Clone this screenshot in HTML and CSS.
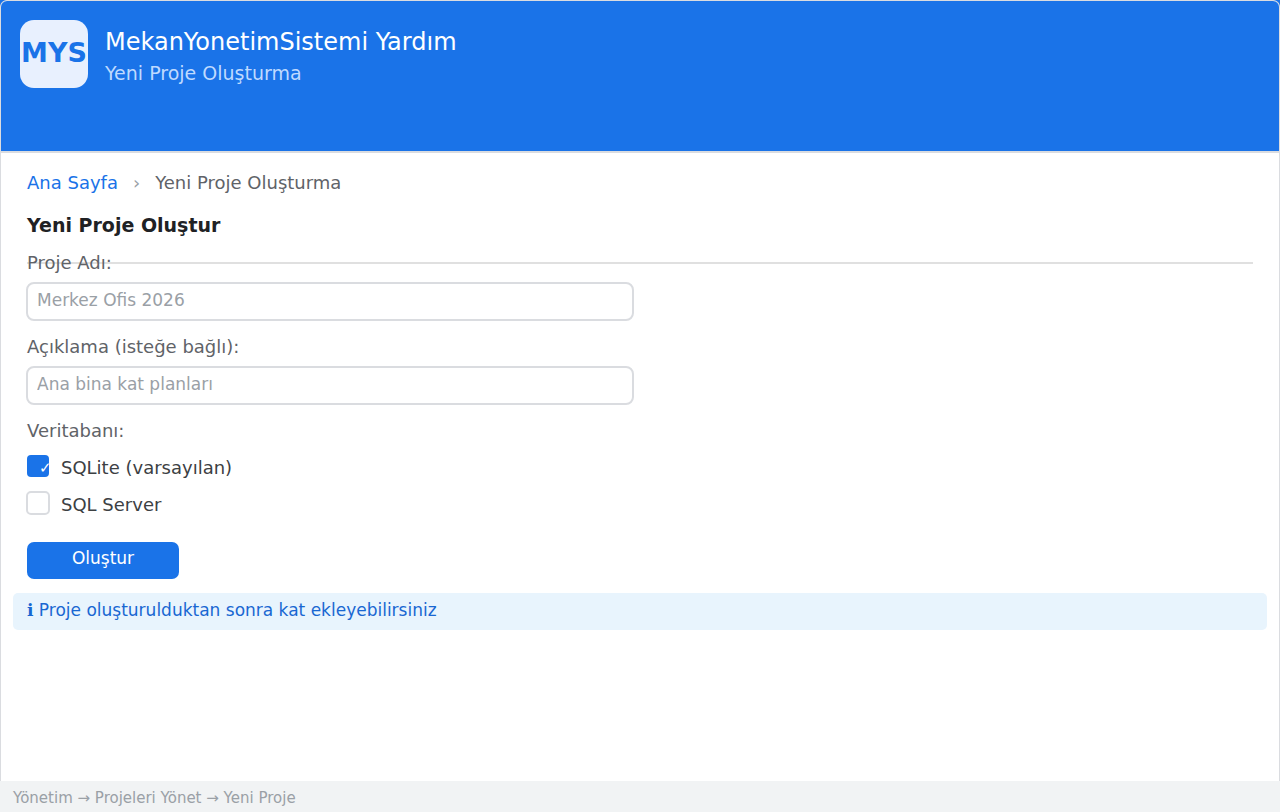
FILE: index.html
```
<!DOCTYPE html>
<html lang="tr">
<head>
    <meta charset="UTF-8">
    <meta name="viewport" content="width=device-width, initial-scale=1.0">
    <title>MekanYonetimSistemi Yardım</title>
    <link rel="stylesheet" href="styles.css">
</head>
<body>
    <div class="window">
        <header class="header">
            <div class="logo">MYS</div>
            <div class="titles">
                <div class="title">MekanYonetimSistemi Yardım</div>
                <div class="subtitle">Yeni Proje Oluşturma</div>
            </div>
        </header>

        <main class="content">
            <nav class="breadcrumb">
                <a href="#">Ana Sayfa</a>
                <span class="separator">›</span>
                <span>Yeni Proje Oluşturma</span>
            </nav>

            <h1 class="heading">Yeni Proje Oluştur</h1>

            <form class="form">
                <div class="field">
                    <label for="name">Proje Adı:</label>
                    <input type="text" id="name" class="text-input" placeholder="Merkez Ofis 2026">
                </div>
                <div class="field">
                    <label for="description">Açıklama (isteğe bağlı):</label>
                    <input type="text" id="description" class="text-input" placeholder="Ana bina kat planları">
                </div>
                <fieldset class="options">
                    <legend>Veritabanı:</legend>
                    <label class="option"><input type="checkbox" class="checkbox" checked>SQLite (varsayılan)</label>
                    <label class="option"><input type="checkbox" class="checkbox">SQL Server</label>
                </fieldset>
                <button type="button" class="button">Oluştur</button>
            </form>

            <p class="note">ℹ Proje oluşturulduktan sonra kat ekleyebilirsiniz</p>
        </main>
    </div>

    <footer class="footer">Yönetim → Projeleri Yönet → Yeni Proje</footer>
</body>
</html>
```
FILE: styles.css
```
* {
    box-sizing: border-box;
}

body {
    display: flex;
    flex-direction: column;
    min-height: 100vh;
    margin: 0;
    font-family: "DejaVu Sans", Verdana, sans-serif;
    font-size: 18px;
    line-height: 22px;
    color: #5f6368;
    background-color: #1a73e8;
}

.window {
    flex: 1;
    border: 1px solid #dadce0;
    border-bottom: 0;
    border-radius: 7px 7px 0 0;
    background-color: white;
    overflow: hidden;
}

/* Header */
.header {
    display: flex;
    gap: 17px;
    min-height: 152px;
    padding: 19px;
    border-bottom: 2px solid #dadce0;
    background-color: #1a73e8;
}

.logo {
    display: flex;
    justify-content: center;
    width: 68px;
    height: 68px;
    border-radius: 14px;
    font-size: 27px;
    font-weight: bold;
    line-height: 66px;
    color: #1a73e8;
    background-color: #e8f0fe;
}

.titles {
    padding-top: 7px;
    line-height: 31px;
}

.title {
    font-size: 24px;
    color: white;
}

.subtitle {
    font-size: 19px;
    color: #bfdaff;
}

/* Content */
.content {
    padding: 19px 12px;
}

.breadcrumb {
    display: flex;
    gap: 15px;
    padding: 0 14px;
}

.breadcrumb a {
    color: #1a73e8;
    text-decoration: none;
}

.separator {
    color: #9aa0a6;
}

.heading {
    margin: 19px 14px 0;
    padding-bottom: 25px;
    border-bottom: 2px solid #e0e0e0;
    font-size: 19px;
    line-height: 24px;
    color: #202124;
}

/* The first label sits on the heading rule */
.form {
    margin: -12px 13px 0;
}

.field {
    display: flex;
    flex-direction: column;
    align-items: flex-start;
    gap: 8px;
    margin-bottom: 15px;
}

.field label {
    padding-left: 1px;
}

.text-input {
    width: calc(50% - 6px);
    height: 39px;
    padding: 0 9px 4px;
    border: 2px solid #dadce0;
    border-radius: 8px;
    font-family: inherit;
    font-size: 17px;
    color: #202124;
    background-color: white;
}

.text-input::placeholder {
    color: #9aa0a6;
    opacity: 1;
}

.options {
    display: flex;
    flex-direction: column;
    gap: 13px;
    margin: 0 0 27px;
    padding: 0;
    border: 0;
}

.options legend {
    margin-bottom: 12px;
    padding: 0 0 0 1px;
}

.option {
    display: flex;
    gap: 11px;
    height: 24px;
    line-height: 28px;
    color: #3c4043;
}

.checkbox {
    appearance: none;
    width: 24px;
    height: 24px;
    margin: 0;
    border: 2px solid #dadce0;
    border-radius: 5px;
    background-color: white;
}

.checkbox:checked {
    width: 22px;
    height: 22px;
    margin: 1px;
    padding-left: 12px;
    border: 0;
    border-radius: 4px;
    background-color: #1a73e8;
    overflow: hidden;
}

.checkbox:checked::after {
    content: "✓";
    display: block;
    font-size: 15px;
    line-height: 26px;
    color: white;
}

.button {
    display: block;
    width: 152px;
    height: 37px;
    margin-left: 1px;
    padding: 0 0 6px;
    border: 0;
    border-radius: 7px;
    font-family: inherit;
    font-size: 17px;
    color: white;
    background-color: #1a73e8;
}

.note {
    margin: 14px 0 0;
    padding: 6px 14px 9px;
    border-radius: 5px;
    font-size: 17px;
    color: #1967d2;
    background-color: #e8f4fd;
}

/* Footer */
.footer {
    padding: 6px 13px 3px;
    font-size: 15px;
    color: #9aa0a6;
    background-color: #f1f3f4;
}
```
